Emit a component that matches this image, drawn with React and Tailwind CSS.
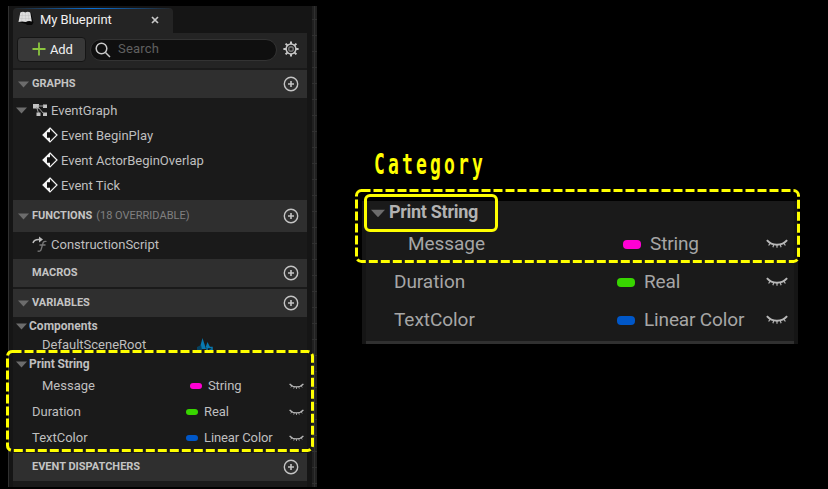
import React from "react";

const Arrow = ({ className = "w-[11px]" }) => (
  <svg viewBox="0 0 11 7" className={`${className} shrink-0`}>
    <path d="M0 0.5H11L5.5 6.5Z" fill="#6c6c6c" />
  </svg>
);

const Plus = () => (
  <svg viewBox="0 0 16 16" className="ml-auto mr-2 size-4 shrink-0" fill="none" stroke="#c4c4c4">
    <circle cx="8" cy="8" r="6.7" strokeWidth="1.4" />
    <path d="M8 5v6M5 8h6" strokeWidth="1.6" />
  </svg>
);

const Eye = ({ className = "w-[15px]" }) => (
  <svg viewBox="0 0 15 7" className={`${className} shrink-0`} fill="none" stroke="#b8b8b8">
    <path d="M0.6 0.8Q3.2 3.9 7.5 3.9T14.4 0.8" strokeWidth="1.3" />
    <path d="M2.7 3L1.8 4.4M5.2 4L4.7 5.6M7.5 4V6M9.8 4l.5 1.6M12.3 3l.9 1.4" strokeWidth="0.8" />
  </svg>
);

const EventIcon = () => (
  <svg viewBox="0 0 16 16" className="-mt-px size-4 shrink-0">
    <path d="M8 1L15 8L8 15L1 8Z" fill="#1a1a1a" stroke="#f4f4f4" strokeWidth="1.2" />
    <path d="M8 1L1 8L8 15V10.5H5V5.5H8Z" fill="#f4f4f4" />
    <path d="M5 5.5H8V4L11.2 8L8 12V10.5H5Z" fill="#111" />
  </svg>
);

const GraphIcon = () => (
  <svg viewBox="0 0 16 14" className="-mt-0.5 h-[14px] w-4 shrink-0" fill="#c2c2c2">
    <path d="M1 1h6v4.5H1zM11 1.5h4V5h-4zM11 9.5h4v3.5h-4zM4.5 9.5h4V13h-4z" />
    <path d="M6 3h6M6 4l6 7M4.5 4l2 6" fill="none" stroke="#a0a0a0" />
  </svg>
);

const FunctionIcon = () => (
  <svg viewBox="0 0 17 17" className="-mt-0.5 h-[17px] w-[17px] shrink-0" fill="none">
    <path d="M1 7Q2 3 8 3.5" stroke="#bbb" strokeWidth="1.5" />
    <path d="M7 0.5L11 3.5L7 6.5Z" fill="#bbb" />
    <path d="M14.5 5.5Q11.5 4.5 10.7 8L9.3 13Q8.6 16 5.5 15M7.5 9h6" stroke="#777" strokeWidth="1.3" />
  </svg>
);

const BookIcon = () => (
  <svg viewBox="0 0 16 15" className="-mt-1 h-[15px] w-4 shrink-0">
    <path d="M1 11L3 1.5Q6 .2 8 1.5Q11 .2 13 1.5L15.5 11.5L14 14H9L8 13Z" fill="#070707" />
    <path d="M2.3 1.5Q5 .2 7.3 1.4Q10 .2 12.3 1.5L13.8 10.5Q10.5 9.5 7.8 11Q4 9.8 .5 11Z" fill="#dedede" />
    <path d="M7.4 1.5L7.8 11M2 4.5L13 4.6M1.5 7.5L13 7.6M4.6 1l-1 9M10 1l1 9" stroke="#b5b5b5" strokeWidth=".35" />
  </svg>
);

const SceneIcon = () => (
  <svg viewBox="0 0 16 13" className="h-[13px] w-4 shrink-0">
    <path d="M5.5 0L9 11H2.5Z" fill="#0879b0" />
    <path d="M10.5 4L13 9H8.7Z" fill="#0879b0" />
    <path d="M0 9L4 7L5 12H0Z" fill="#06425f" />
    <path d="M10 12V9.5h5V12M12.5 12h3" fill="none" stroke="#0879b0" strokeWidth="1.5" />
  </svg>
);

const Gear = () => (
  <svg viewBox="0 0 16 16" className="-mt-0.5 ml-1.5 size-4 shrink-0" fill="none" stroke="#c8c8c8">
    <circle cx="8" cy="8" r="4.9" strokeWidth="1.5" />
    <circle cx="8" cy="8" r="2.3" stroke="#777" strokeWidth="1.4" />
    <path d="M8 .4V3M8 13v2.6M.4 8H3M13 8h2.6M2.6 2.6l1.8 1.8M11.6 11.6l1.8 1.8M2.6 13.4l1.8-1.8M11.6 4.4l1.8-1.8" strokeWidth="2" />
  </svg>
);

function Header({ title, note, arrow = true, className = "h-7" }) {
  return (
    <div className={`${className} flex shrink-0 items-center bg-[#2f2f2f] pl-[5px]`}>
      <div className="flex w-[14px]">{arrow && <Arrow />}</div>
      <span className="pb-0.5 text-[11px] font-bold text-[#c4c4c4]">{title}</span>
      {note && <span className="ml-1 pb-0.5 text-[11px] text-[#808080]">{note}</span>}
      <Plus />
    </div>
  );
}

function Variable({ name, type, color, indent, offset }) {
  return (
    <div className="flex h-[26px] shrink-0 items-center">
      <span className={`${indent} shrink-0 pb-0.5`}>{name}</span>
      <span className={`${offset} flex flex-1 items-center`}>
        <i className={`${color} mr-[6px] h-[6px] w-3 rounded-[3px]`} />
        <span className="pb-0.5 tracking-[-0.1px]">{type}</span>
      </span>
      <Eye className="mr-[3px] w-[15px]" />
    </div>
  );
}

function LargeVariable({ name, type, color, indent, offset }) {
  return (
    <div className="flex h-[38px] shrink-0 items-center">
      <span className={`${indent} shrink-0 pb-px`}>{name}</span>
      <span className={`${offset} flex flex-1 items-center`}>
        <i className={`${color} mr-[9px] h-[9px] w-[18px] rounded-[4px]`} />
        <span className="pb-px tracking-[-0.15px]">{type}</span>
      </span>
      <Eye className="mr-[6px] w-[22px]" />
    </div>
  );
}

function Dashes({ className, w, h }) {
  return (
    <svg className={`${className} absolute`} width={w} height={h} fill="none">
      <rect x="1.5" y="1.5" width={w - 3} height={h - 3} rx="5" stroke="#ff0" strokeWidth="3" strokeDasharray="9 3" />
    </svg>
  );
}

export default function App() {
  return (
    <main className="relative flex h-[489px] w-[828px] overflow-hidden bg-black font-['Roboto',sans-serif] text-[13px] leading-none text-[#bfbfbf]">
      <section className="ml-2 mt-[6px] flex h-[481px] w-[309px] border-l border-[#303030] bg-[#151515] pl-1">
        <div className="flex w-[294px] flex-col bg-[#1a1a1a]">
          <div className="flex h-[27px] shrink-0 bg-[#151515] pt-[2px]">
            <div className="flex w-[160px] items-center rounded-t-[4px] bg-[#242424] bg-[linear-gradient(90deg,#242424,#0870d8,#242424)] bg-[length:100%_1px] bg-no-repeat pl-[5px] text-[#f0f0f0]">
              <BookIcon />
              <span className="ml-[6px] pb-0.5 tracking-[-0.05px]">My Blueprint</span>
              <svg viewBox="0 0 8 8" className="-mt-0.5 ml-auto mr-[14px] size-2" stroke="#c8c8c8" strokeWidth="1.7"><path d="M1 1l6 6M7 1L1 7" /></svg>
            </div>
          </div>
          <div className="mb-[2px] flex h-[35px] shrink-0 items-center bg-[#242424] pb-[2px] pl-1">
            <button className="flex h-[25px] w-[69px] items-center rounded-[4px] border border-[#151515] bg-[#383838] pl-[14px] text-[#f2f2f2]">
              <svg viewBox="0 0 14 14" className="-mt-0.5 size-[14px]" stroke="#8bc53f" strokeWidth="1.8"><path d="M7 .5v13M.5 7h13" /></svg>
              <span className="ml-1 tracking-[-0.2px]">Add</span>
            </button>
            <div className="ml-1 flex h-[22px] w-[187px] items-center rounded-full border border-[#333] bg-[#0f0f0f] pl-1 text-[#606060]">
              <svg viewBox="0 0 16 16" className="size-4" fill="none" stroke="#c8c8c8" strokeWidth="1.5"><circle cx="6.5" cy="6.5" r="5.3" /><path d="M10.5 10.5l4.5 4.5" /></svg>
              <span className="ml-[7px] pb-0.5 tracking-[0.2px]">Search</span>
            </div>
            <Gear />
          </div>
          <Header title="GRAPHS" />
          <div className="flex h-[25px] shrink-0 items-center pl-[3px]"><Arrow /><span className="ml-[5px] flex"><GraphIcon /></span><span className="ml-[3px]">EventGraph</span></div>
          {["Event BeginPlay", "Event ActorBeginOverlap", "Event Tick"].map((label) => (
            <div key={label} className="flex h-[25px] shrink-0 items-center pl-[29px]"><EventIcon /><span className="ml-[3px]">{label}</span></div>
          ))}
          <div className="h-[2px] shrink-0" />
          <Header title="FUNCTIONS" note="(18 OVERRIDABLE)" className="h-8" />
          <div className="flex h-[27px] shrink-0 items-center pl-[19px]"><FunctionIcon /><span className="ml-[2px] pb-0.5">ConstructionScript</span></div>
          <Header title="MACROS" arrow={false} />
          <div className="h-[2px] shrink-0" />
          <Header title="VARIABLES" />
          <div className="flex h-[18px] shrink-0 items-center pl-[3px] text-[12px] font-bold"><Arrow /><span className="ml-[2px]">Components</span></div>
          <div className="flex h-[18px] shrink-0 items-center pl-[29px]"><span className="w-[155px]">DefaultSceneRoot</span><SceneIcon /></div>
          <div className="flex h-[20px] shrink-0 items-center pl-[3px] pt-0.5 text-[12px] font-bold"><Arrow /><span className="ml-[2px] tracking-[-0.1px]">Print String</span></div>
          <div className="flex h-[80px] shrink-0 flex-col">
            <Variable name="Message" type="String" color="bg-[#ff00d4]" indent="w-[147px] pl-[29px]" offset="pl-[30px]" />
            <Variable name="Duration" type="Real" color="bg-[#38d500]" indent="w-[147px] pl-[19px]" offset="pl-[26px]" />
            <Variable name="TextColor" type="Linear Color" color="bg-[#0057c8]" indent="w-[147px] pl-[19px]" offset="pl-[26px]" />
          </div>
          <Header title="EVENT DISPATCHERS" arrow={false} />
        </div>
        <div className="ml-[5px] w-[5px] bg-[#202020] bg-[linear-gradient(90deg,transparent_2px,#303030_2px,#303030_3px,transparent_3px),linear-gradient(#303030_1px,transparent_1px)] bg-[length:5px_16px] bg-[position:0_13px]" />
      </section>

      <section className="ml-[45px] mt-[201px] flex h-[143px] w-[436px] flex-col border-x-4 border-[#151515] bg-[#1a1a1a] text-[19px] tracking-[-0.05px] text-[#a6a6a6]">
        <div className="flex h-6 shrink-0 items-center pl-[5px] text-[18px] font-bold tracking-[-0.3px] text-[#b2b2b2]"><Arrow className="w-[14px]" /><span className="ml-1 pb-0.5">Print String</span></div>
        <LargeVariable name="Message" type="String" color="bg-[#ff00d4]" indent="w-[220px] pl-[42px]" offset="pl-[37px]" />
        <LargeVariable name="Duration" type="Real" color="bg-[#38d500]" indent="w-[220px] pl-[28px]" offset="pl-[31px]" />
        <LargeVariable name="TextColor" type="Linear Color" color="bg-[#0057c8]" indent="w-[220px] pl-[28px]" offset="pl-[31px]" />
        <div className="mt-auto h-[3px] bg-[#303030]" />
      </section>

      <div className="absolute left-[374px] top-[150px] origin-left scale-x-[.62] whitespace-nowrap font-['DejaVu_Sans_Mono',monospace] text-[29px] font-bold tracking-[5.1px] text-[#ff0]">Category</div>
      <Dashes className="left-[6px] top-[350px]" w={308} h={102} />
      <Dashes className="left-[355px] top-[189px]" w={445} h={74} />
      <div className="absolute left-[364px] top-[194px] h-[38px] w-[134px] rounded-[6px] border-3 border-[#ff0]" />
    </main>
  );
}
